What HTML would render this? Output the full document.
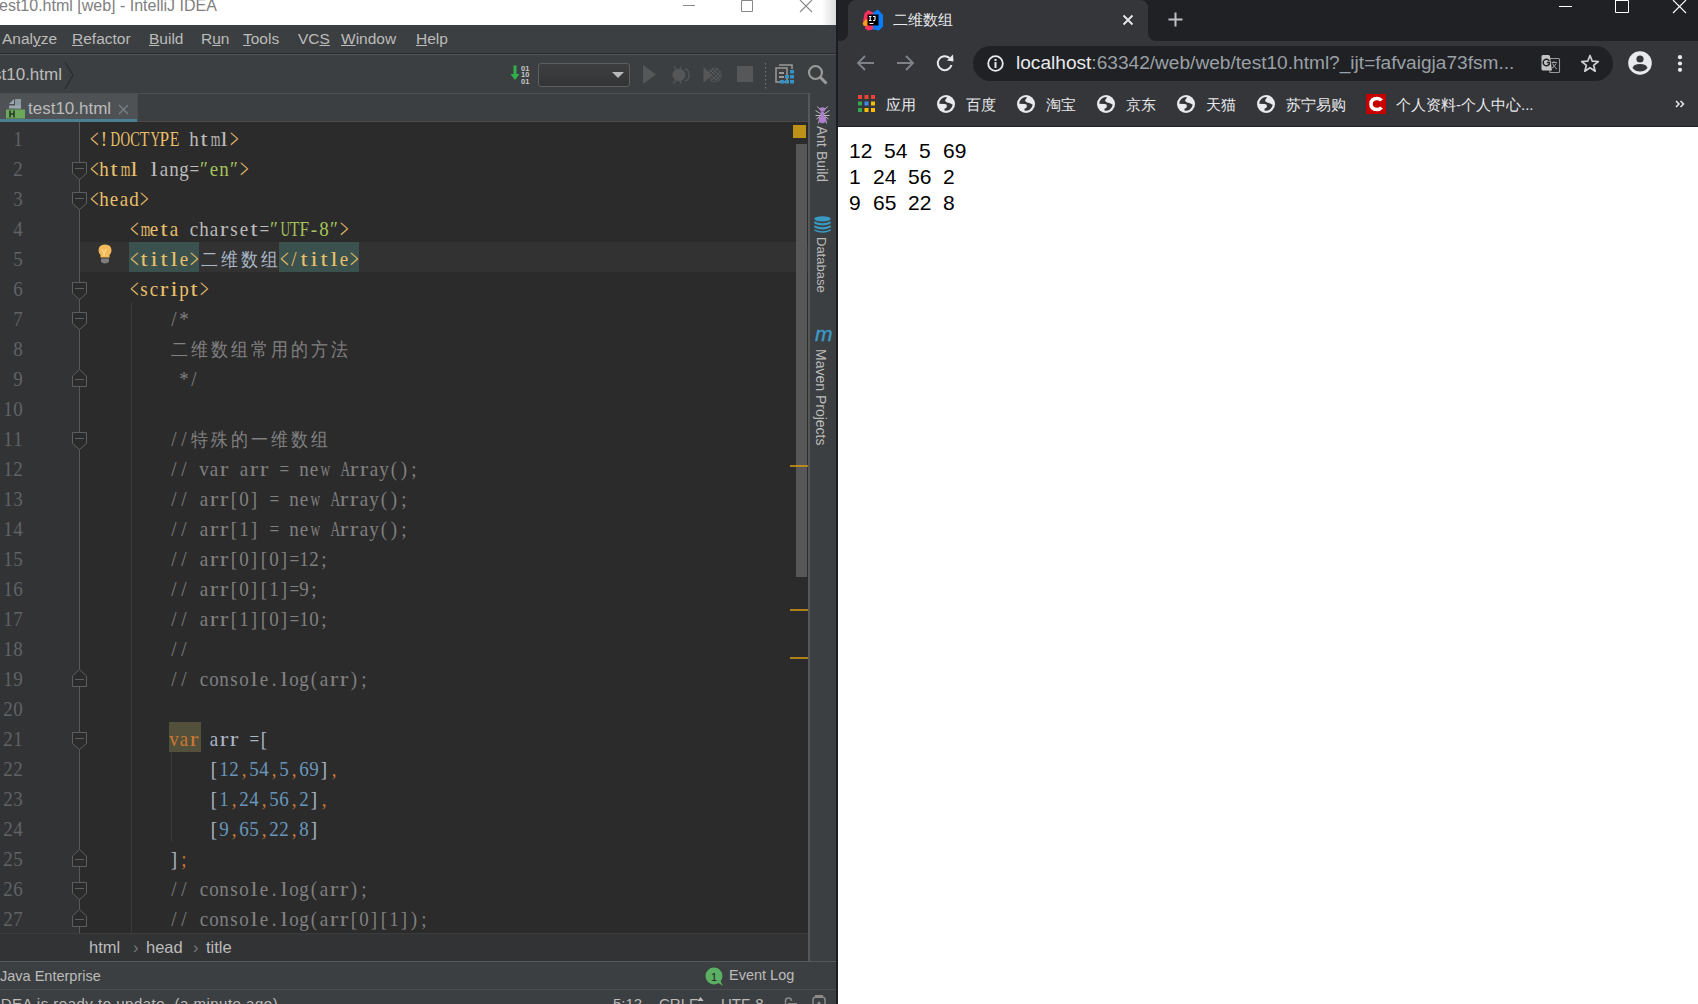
<!DOCTYPE html>
<html><head><meta charset="utf-8">
<style>
*{margin:0;padding:0;box-sizing:border-box}
html,body{width:1698px;height:1004px;overflow:hidden;background:#fff;font-family:"Liberation Sans",sans-serif}
.a{position:absolute}
svg{display:block}
#ide{left:0;top:0;width:837px;height:1004px;background:#3c3f41;overflow:hidden}
#title{left:0;top:0;width:837px;height:25px;background:#fff;overflow:hidden}
#title .t{left:-1px;top:-3px;font-size:16px;color:#808080;white-space:nowrap}
#menu{left:0;top:25px;width:837px;height:28px;background:#3c3f41}
#menu span{position:absolute;top:5px;font-size:15.5px;color:#bbbbbb;white-space:nowrap}
#menu u{text-decoration:underline;text-underline-offset:1px;text-decoration-thickness:1px}
#nav{left:0;top:53px;width:837px;height:40px;background:#3c3f41;border-top:1px solid #292929;box-shadow:inset 0 1px 0 #555}
#tabs{left:0;top:93px;width:809px;height:29px;background:#3c3f41;border-top:1px solid #4f4f4f;border-bottom:1px solid #4b4b4b}
#editor{left:0;top:122px;width:808px;height:811px;background:#2b2b2b;overflow:hidden}
#gutter{left:0;top:0;width:80px;height:811px;background:#313335;border-right:1px solid #555759}
#curline{left:80px;top:120px;width:729px;height:30px;background:#323232}
.ln{position:absolute;left:3px;width:20px;text-align:right;transform:scaleY(1.12);transform-origin:0 21.4px;font-family:"Liberation Serif",serif;font-size:19px;color:#606366;line-height:30px;height:30px;white-space:nowrap}
.cl{position:absolute;left:89px;transform:scaleY(1.12);transform-origin:0 21.4px;font-family:"Liberation Serif",serif;font-size:19px;color:#a9b7c6;line-height:30px;height:30px;white-space:nowrap}
.cl i,.ln i{display:inline-block;width:10px;text-align:center;font-style:normal}
.cl b{display:inline-block;height:1px}
.tg{color:#e8bf6a}.at{color:#bababa}.av{color:#a5c25c}.cm{color:#808080}.kw{color:#cc7832}.nu{color:#6897bb}.nt{color:#a9b7c6}
.tgh{color:#e8bf6a}
.kwh{color:#cc7832}
.cj{display:inline-block;width:20px;text-align:center;overflow:visible;font-size:17px}
#crumb{left:0;top:933px;width:809px;height:28px;background:#313335;border-top:1px solid #3a3c3e}
#crumb span{position:absolute;top:4px;font-size:16.5px;color:#bbbbbb;white-space:nowrap}
#rstrip{left:808px;top:93px;width:29px;height:868px;background:#3c3f41;border-left:2px solid #555759}
.vt{position:absolute;white-space:nowrap;font-size:14px;color:#bbbbbb;transform-origin:0 0;transform:rotate(90deg)}
#status1{left:0;top:961px;width:837px;height:29px;background:#3c3f41;border-top:1px solid #555759}
#status2{left:0;top:989px;width:837px;height:15px;background:#3c3f41;border-top:1px solid #4b4d4f;overflow:hidden}
#chrome{left:837px;top:0;width:861px;height:1004px;background:#fff}
#tabstrip{left:0;top:0;width:861px;height:41px;background:#202124}
#tab{left:11px;top:0;width:300px;height:41px;background:#35363a;border-radius:0 0 0 0}
#toolbar{left:0;top:41px;width:861px;height:44px;background:#35363a}
#omni{left:136px;top:5px;width:640px;height:35px;background:#202124;border-radius:18px}
#bm{left:0;top:85px;width:861px;height:42px;background:#35363a;border-bottom:1px solid #202124}
#page{left:1px;top:127px;width:860px;height:877px;background:#fff}
.pt{position:absolute;font-size:21px;color:#000;white-space:pre;font-family:"Liberation Sans",sans-serif}
.cjt{white-space:nowrap;font-size:15px;color:#e8eaed;line-height:16px}
.cjt .c{display:inline-block;width:15px;height:16px;overflow:hidden;vertical-align:top}
.cjt .lt{display:inline-block;vertical-align:top}
#tab{border-radius:8px 8px 0 0}
</style></head><body>
<div id="ide" class="a">
  <div id="title" class="a"><div class="t a">est10.html [web] - IntelliJ IDEA</div><div class="a" style="left:822px;top:0;width:15px;height:25px;background:linear-gradient(90deg,#fff,#ddd 90%,#222 94%)"></div>
    <svg class="a" style="left:680px;top:0" width="140" height="25" viewBox="0 0 140 25">
      <path d="M3 5.5H15" stroke="#888" stroke-width="1"/>
      <path d="M61.5 0.5V11.5H72.5V0.5Z" fill="none" stroke="#888" stroke-width="1"/>
      <path d="M120 0L132 12M132 0L120 12" stroke="#888" stroke-width="1.1"/>
    </svg>
  </div>
  <div id="menu" class="a">
    <span style="left:2px">Anal<u>y</u>ze</span>
    <span style="left:72px"><u>R</u>efactor</span>
    <span style="left:149px"><u>B</u>uild</span>
    <span style="left:201px">R<u>u</u>n</span>
    <span style="left:243px"><u>T</u>ools</span>
    <span style="left:298px">VC<u>S</u></span>
    <span style="left:341px"><u>W</u>indow</span>
    <span style="left:416px"><u>H</u>elp</span>
  </div>
  <div id="nav" class="a">
    <div class="a" style="left:-7px;top:11px;font-size:17px;color:#bbbbbb;white-space:nowrap">st10.html</div>
    <svg class="a" style="left:64px;top:8px" width="12" height="28" viewBox="0 0 12 28"><path d="M1 0L9 13L1 27" fill="none" stroke="#2b2b2b" stroke-width="1.2"/></svg>
    <!-- toolbar icons -->
    <svg class="a" style="left:510px;top:10px" width="22" height="22" viewBox="0 0 22 22">
      <path d="M3.5 1.5H6.5V10H9.5L5 16L0.5 10H3.5Z" fill="#2fb04a"/>
      <text x="11" y="7" font-family="Liberation Sans" font-weight="bold" font-size="7.5" fill="#c8c8c8">01</text>
      <text x="11" y="13" font-family="Liberation Sans" font-weight="bold" font-size="7.5" fill="#c8c8c8">10</text>
      <text x="11" y="19.5" font-family="Liberation Sans" font-weight="bold" font-size="7.5" fill="#c8c8c8">01</text>
    </svg>
    <div class="a" style="left:538px;top:9px;width:92px;height:24px;border:1px solid #5e6060;border-radius:3px;background:linear-gradient(#3c3e40,#323436)"></div>
    <svg class="a" style="left:611px;top:17px" width="14" height="8" viewBox="0 0 14 8"><path d="M1 1H13L7 7Z" fill="#b9b9b9"/></svg>
    <svg class="a" style="left:643px;top:11px" width="14" height="19" viewBox="0 0 14 19"><path d="M0 0L13 9.5L0 19Z" fill="#555758"/></svg>
    <svg class="a" style="left:671px;top:11px" width="20" height="20" viewBox="0 0 20 20">
      <ellipse cx="8" cy="10" rx="6.5" ry="6.2" fill="#545658"/>
      <path d="M3 1.5L5.5 4.5M10 1.5L9 4.5M2 18.5L5 15.5M10 18.5L9 15.5" stroke="#545658" stroke-width="1.3"/>
      <path d="M14 4Q18 4.5 18 10Q18 15.5 14 16" fill="none" stroke="#545658" stroke-width="1.3"/>
      <path d="M12.5 5.5Q15.5 7 15.5 10Q15.5 13 12.5 14.5" fill="none" stroke="#3c3f41" stroke-width="1"/>
    </svg>
    <svg class="a" style="left:703px;top:11px" width="20" height="20" viewBox="0 0 20 20">
      <defs><clipPath id="cc"><circle cx="11.5" cy="10" r="7.5"/></clipPath></defs>
      <path d="M0.5 2L9 10L0.5 18Z" fill="#545658"/>
      <g clip-path="url(#cc)" stroke="#545658" stroke-width="1.2">
        <path d="M0 6L14 20M0 2L18 20M3 1L20 18M7 1L20 14M11 1L20 10M0 14L14 0M0 18L18 0M3 21L20 4M7 21L20 8M11 21L20 12"/>
      </g>
    </svg>
    <div class="a" style="left:737px;top:12px;width:16px;height:16px;background:#555758"></div>
    <svg class="a" style="left:764px;top:9px" width="3" height="26" viewBox="0 0 3 26"><path d="M1.5 0V26" stroke="#6b6d6f" stroke-width="1.2" stroke-dasharray="1.5 2.5"/></svg>
    <svg class="a" style="left:775px;top:10px" width="21" height="21" viewBox="0 0 21 21">
      <path d="M4 1H17V5" fill="none" stroke="#9a9a9a" stroke-width="1.5"/>
      <rect x="1" y="4" width="11" height="14" fill="#3c3f41" stroke="#9a9a9a" stroke-width="1.5"/>
      <rect x="4" y="8" width="5" height="2" fill="#9a9a9a"/><rect x="4" y="12" width="5" height="2" fill="#9a9a9a"/>
      <rect x="15" y="6" width="4" height="3.5" fill="#3592c4"/><rect x="10" y="11" width="4" height="3.5" fill="#3592c4"/><rect x="15" y="11" width="4" height="3.5" fill="#3592c4"/>
      <rect x="5" y="16" width="4" height="3.5" fill="#3592c4"/><rect x="10" y="16" width="4" height="3.5" fill="#3592c4"/><rect x="15" y="16" width="4" height="3.5" fill="#3592c4"/>
    </svg>
    <svg class="a" style="left:807px;top:10px" width="22" height="22" viewBox="0 0 22 22">
      <circle cx="8.5" cy="8.5" r="6.5" fill="none" stroke="#9a9a9a" stroke-width="2.2"/>
      <path d="M13 13L19.5 19.5" stroke="#9a9a9a" stroke-width="3"/>
    </svg>
  </div>
  <div id="tabs" class="a">
    <div class="a" style="left:0;top:0;width:137px;height:28px;background:#4e5254;border-bottom:3px solid #4b7f92;box-shadow:1px 0 0 #4b4b4b"></div>
    <svg class="a" style="left:5px;top:5px" width="22" height="20" viewBox="0 0 22 20">
      <path d="M4 5L9 0V5Z" fill="#9aa7b0"/>
      <rect x="10" y="0" width="6" height="9.5" fill="#8e9aa2"/>
      <rect x="4" y="6.5" width="12" height="3" fill="#9aa7b0"/>
      <rect x="1" y="10.5" width="19" height="9" fill="#6aa85a"/>
      <path d="M5 11.5V18.5M9 11.5V18.5M5 15H9" stroke="#2a3a28" stroke-width="1.6"/>
    </svg>
    <div class="a" style="left:28px;top:5px;font-size:17px;color:#bbbbbb;white-space:nowrap">test10.html</div>
    <svg class="a" style="left:118px;top:10px" width="11" height="11" viewBox="0 0 11 11"><path d="M1 1L10 10M10 1L1 10" stroke="#7b8084" stroke-width="1.2"/></svg>
  </div>
  <div id="editor" class="a">
    <div id="gutter" class="a"></div>
    <div id="curline" class="a"></div>
    <svg class="a" style="left:79px;top:0" width="2" height="811"><path d="M0.5 0V811" stroke="#555759"/></svg>
    <!-- indent guides -->
    <div class="a" style="left:131px;top:180px;width:1px;height:631px;background:#393939"></div>
    <div class="a" style="left:171px;top:630px;width:1px;height:90px;background:#393939"></div>
    <div class="a" style="left:129px;top:120px;width:70px;height:30px;background:#3b514d"></div>
    <div class="a" style="left:279px;top:120px;width:80px;height:30px;background:#3b514d"></div>
    <div class="a" style="left:169px;top:600px;width:32px;height:30px;background:#52503a"></div>
    <svg class="a" style="left:71px;top:40px" width="17" height="19" viewBox="0 0 17 19"><path d="M1.5 0.5H15.5V11.5L8.5 17.5L1.5 11.5Z" fill="#2b2b2b" stroke="#5c5f61"/><path d="M4 6.5H13" stroke="#5c5f61"/></svg>
<svg class="a" style="left:71px;top:70px" width="17" height="19" viewBox="0 0 17 19"><path d="M1.5 0.5H15.5V11.5L8.5 17.5L1.5 11.5Z" fill="#2b2b2b" stroke="#5c5f61"/><path d="M4 6.5H13" stroke="#5c5f61"/></svg>
<svg class="a" style="left:71px;top:160px" width="17" height="19" viewBox="0 0 17 19"><path d="M1.5 0.5H15.5V11.5L8.5 17.5L1.5 11.5Z" fill="#2b2b2b" stroke="#5c5f61"/><path d="M4 6.5H13" stroke="#5c5f61"/></svg>
<svg class="a" style="left:71px;top:190px" width="17" height="19" viewBox="0 0 17 19"><path d="M1.5 0.5H15.5V11.5L8.5 17.5L1.5 11.5Z" fill="#2b2b2b" stroke="#5c5f61"/><path d="M4 6.5H13" stroke="#5c5f61"/></svg>
<svg class="a" style="left:71px;top:310px" width="17" height="19" viewBox="0 0 17 19"><path d="M1.5 0.5H15.5V11.5L8.5 17.5L1.5 11.5Z" fill="#2b2b2b" stroke="#5c5f61"/><path d="M4 6.5H13" stroke="#5c5f61"/></svg>
<svg class="a" style="left:71px;top:610px" width="17" height="19" viewBox="0 0 17 19"><path d="M1.5 0.5H15.5V11.5L8.5 17.5L1.5 11.5Z" fill="#2b2b2b" stroke="#5c5f61"/><path d="M4 6.5H13" stroke="#5c5f61"/></svg>
<svg class="a" style="left:71px;top:760px" width="17" height="19" viewBox="0 0 17 19"><path d="M1.5 0.5H15.5V11.5L8.5 17.5L1.5 11.5Z" fill="#2b2b2b" stroke="#5c5f61"/><path d="M4 6.5H13" stroke="#5c5f61"/></svg>
<svg class="a" style="left:71px;top:247px" width="17" height="19" viewBox="0 0 17 19"><path d="M1.5 17.5H15.5V7L8.5 0.5L1.5 7Z" fill="#2b2b2b" stroke="#5c5f61"/><path d="M4 10.5H13" stroke="#5c5f61"/></svg>
<svg class="a" style="left:71px;top:547px" width="17" height="19" viewBox="0 0 17 19"><path d="M1.5 17.5H15.5V7L8.5 0.5L1.5 7Z" fill="#2b2b2b" stroke="#5c5f61"/><path d="M4 10.5H13" stroke="#5c5f61"/></svg>
<svg class="a" style="left:71px;top:727px" width="17" height="19" viewBox="0 0 17 19"><path d="M1.5 17.5H15.5V7L8.5 0.5L1.5 7Z" fill="#2b2b2b" stroke="#5c5f61"/><path d="M4 10.5H13" stroke="#5c5f61"/></svg>
<svg class="a" style="left:71px;top:787px" width="17" height="19" viewBox="0 0 17 19"><path d="M1.5 17.5H15.5V7L8.5 0.5L1.5 7Z" fill="#2b2b2b" stroke="#5c5f61"/><path d="M4 10.5H13" stroke="#5c5f61"/></svg>
    <svg class="a" style="left:98px;top:122px" width="16" height="21" viewBox="0 0 16 21">
      <path d="M2.5 11Q0.5 9 0.5 6.5Q0.5 0.5 7 0.5Q13.5 0.5 13.5 6.5Q13.5 9 11.5 11V13.5H2.5Z" fill="#f6b957"/>
      <path d="M3.5 5L6 8.5L8.5 5M6 8.5V12" stroke="#fde7a8" stroke-width="1" fill="none"/>
      <path d="M3 14.5H11V17.5Q10 19.5 7 19.5Q4 19.5 3 17.5Z" fill="#7d7d7d"/>
    </svg>
    <div class="ln" style="top:3px"><i>1</i></div>
<div class="cl" style="top:3px"><span class="tg"><i style="transform:scale(0.8,1.3)">&lt;</i><i>!</i><i style="transform:scaleX(0.70)">D</i><i style="transform:scaleX(0.70)">O</i><i style="transform:scaleX(0.76)">C</i><i style="transform:scaleX(0.83)">T</i><i style="transform:scaleX(0.70)">Y</i><i style="transform:scaleX(0.91)">P</i><i style="transform:scaleX(0.83)">E</i></span><span class="at"><b style="width:10px"></b><i>h</i><i style="transform:scaleX(1.35)">t</i><i style="transform:scaleX(0.65)">m</i><i style="transform:scaleX(1.35)">l</i></span><span class="tg"><i style="transform:scale(0.8,1.3)">&gt;</i></span></div>
<div class="ln" style="top:33px"><i>2</i></div>
<div class="cl" style="top:33px"><span class="tg"><i style="transform:scale(0.8,1.3)">&lt;</i><i>h</i><i style="transform:scaleX(1.35)">t</i><i style="transform:scaleX(0.65)">m</i><i style="transform:scaleX(1.35)">l</i></span><span class="at"><b style="width:10px"></b><i style="transform:scaleX(1.35)">l</i><i>a</i><i>n</i><i>g</i><i style="transform:scaleX(0.90)">=</i></span><span class="av"><i>″</i><i>e</i><i>n</i><i>″</i></span><span class="tg"><i style="transform:scale(0.8,1.3)">&gt;</i></span></div>
<div class="ln" style="top:63px"><i>3</i></div>
<div class="cl" style="top:63px"><span class="tg"><i style="transform:scale(0.8,1.3)">&lt;</i><i>h</i><i>e</i><i>a</i><i>d</i><i style="transform:scale(0.8,1.3)">&gt;</i></span></div>
<div class="ln" style="top:93px"><i>4</i></div>
<div class="cl" style="top:93px"><b style="width:40px"></b><span class="tg"><i style="transform:scale(0.8,1.3)">&lt;</i><i style="transform:scaleX(0.65)">m</i><i>e</i><i style="transform:scaleX(1.35)">t</i><i>a</i></span><span class="at"><b style="width:10px"></b><i>c</i><i>h</i><i>a</i><i style="transform:scaleX(1.35)">r</i><i>s</i><i>e</i><i style="transform:scaleX(1.35)">t</i><i style="transform:scaleX(0.90)">=</i></span><span class="av"><i>″</i><i style="transform:scaleX(0.70)">U</i><i style="transform:scaleX(0.83)">T</i><i style="transform:scaleX(0.91)">F</i><i>-</i><i>8</i><i>″</i></span><span class="tg"><i style="transform:scale(0.8,1.3)">&gt;</i></span></div>
<div class="ln" style="top:123px"><i>5</i></div>
<div class="cl" style="top:123px"><b style="width:40px"></b><span class="tgh"><i style="transform:scale(0.8,1.3)">&lt;</i><i style="transform:scaleX(1.35)">t</i><i style="transform:scaleX(1.35)">i</i><i style="transform:scaleX(1.35)">t</i><i style="transform:scaleX(1.35)">l</i><i>e</i><i style="transform:scale(0.8,1.3)">&gt;</i></span><span class="cj">二</span><span class="cj">维</span><span class="cj">数</span><span class="cj">组</span><span class="tgh"><i style="transform:scale(0.8,1.3)">&lt;</i><i>/</i><i style="transform:scaleX(1.35)">t</i><i style="transform:scaleX(1.35)">i</i><i style="transform:scaleX(1.35)">t</i><i style="transform:scaleX(1.35)">l</i><i>e</i><i style="transform:scale(0.8,1.3)">&gt;</i></span></div>
<div class="ln" style="top:153px"><i>6</i></div>
<div class="cl" style="top:153px"><b style="width:40px"></b><span class="tg"><i style="transform:scale(0.8,1.3)">&lt;</i><i>s</i><i>c</i><i style="transform:scaleX(1.35)">r</i><i style="transform:scaleX(1.35)">i</i><i>p</i><i style="transform:scaleX(1.35)">t</i><i style="transform:scale(0.8,1.3)">&gt;</i></span></div>
<div class="ln" style="top:183px"><i>7</i></div>
<div class="cl" style="top:183px"><span class="cm"><b style="width:80px"></b><i>/</i><i>*</i></span></div>
<div class="ln" style="top:213px"><i>8</i></div>
<div class="cl" style="top:213px"><span class="cm"><b style="width:80px"></b></span><span class="cm"><span class="cj">二</span><span class="cj">维</span><span class="cj">数</span><span class="cj">组</span><span class="cj">常</span><span class="cj">用</span><span class="cj">的</span><span class="cj">方</span><span class="cj">法</span></span></div>
<div class="ln" style="top:243px"><i>9</i></div>
<div class="cl" style="top:243px"><span class="cm"><b style="width:90px"></b><i>*</i><i>/</i></span></div>
<div class="ln" style="top:273px"><i>1</i><i>0</i></div>
<div class="ln" style="top:303px"><i>1</i><i>1</i></div>
<div class="cl" style="top:303px"><span class="cm"><b style="width:80px"></b><i>/</i><i>/</i></span><span class="cm"><span class="cj">特</span><span class="cj">殊</span><span class="cj">的</span><span class="cj">一</span><span class="cj">维</span><span class="cj">数</span><span class="cj">组</span></span></div>
<div class="ln" style="top:333px"><i>1</i><i>2</i></div>
<div class="cl" style="top:333px"><span class="cm"><b style="width:80px"></b><i>/</i><i>/</i><b style="width:10px"></b><i>v</i><i>a</i><i style="transform:scaleX(1.35)">r</i><b style="width:10px"></b><i>a</i><i style="transform:scaleX(1.35)">r</i><i style="transform:scaleX(1.35)">r</i><b style="width:10px"></b><i style="transform:scaleX(0.90)">=</i><b style="width:10px"></b><i>n</i><i>e</i><i style="transform:scaleX(0.70)">w</i><b style="width:10px"></b><i style="transform:scaleX(0.70)">A</i><i style="transform:scaleX(1.35)">r</i><i style="transform:scaleX(1.35)">r</i><i>a</i><i>y</i><i>(</i><i>)</i><i>;</i></span></div>
<div class="ln" style="top:363px"><i>1</i><i>3</i></div>
<div class="cl" style="top:363px"><span class="cm"><b style="width:80px"></b><i>/</i><i>/</i><b style="width:10px"></b><i>a</i><i style="transform:scaleX(1.35)">r</i><i style="transform:scaleX(1.35)">r</i><i>[</i><i>0</i><i>]</i><b style="width:10px"></b><i style="transform:scaleX(0.90)">=</i><b style="width:10px"></b><i>n</i><i>e</i><i style="transform:scaleX(0.70)">w</i><b style="width:10px"></b><i style="transform:scaleX(0.70)">A</i><i style="transform:scaleX(1.35)">r</i><i style="transform:scaleX(1.35)">r</i><i>a</i><i>y</i><i>(</i><i>)</i><i>;</i></span></div>
<div class="ln" style="top:393px"><i>1</i><i>4</i></div>
<div class="cl" style="top:393px"><span class="cm"><b style="width:80px"></b><i>/</i><i>/</i><b style="width:10px"></b><i>a</i><i style="transform:scaleX(1.35)">r</i><i style="transform:scaleX(1.35)">r</i><i>[</i><i>1</i><i>]</i><b style="width:10px"></b><i style="transform:scaleX(0.90)">=</i><b style="width:10px"></b><i>n</i><i>e</i><i style="transform:scaleX(0.70)">w</i><b style="width:10px"></b><i style="transform:scaleX(0.70)">A</i><i style="transform:scaleX(1.35)">r</i><i style="transform:scaleX(1.35)">r</i><i>a</i><i>y</i><i>(</i><i>)</i><i>;</i></span></div>
<div class="ln" style="top:423px"><i>1</i><i>5</i></div>
<div class="cl" style="top:423px"><span class="cm"><b style="width:80px"></b><i>/</i><i>/</i><b style="width:10px"></b><i>a</i><i style="transform:scaleX(1.35)">r</i><i style="transform:scaleX(1.35)">r</i><i>[</i><i>0</i><i>]</i><i>[</i><i>0</i><i>]</i><i style="transform:scaleX(0.90)">=</i><i>1</i><i>2</i><i>;</i></span></div>
<div class="ln" style="top:453px"><i>1</i><i>6</i></div>
<div class="cl" style="top:453px"><span class="cm"><b style="width:80px"></b><i>/</i><i>/</i><b style="width:10px"></b><i>a</i><i style="transform:scaleX(1.35)">r</i><i style="transform:scaleX(1.35)">r</i><i>[</i><i>0</i><i>]</i><i>[</i><i>1</i><i>]</i><i style="transform:scaleX(0.90)">=</i><i>9</i><i>;</i></span></div>
<div class="ln" style="top:483px"><i>1</i><i>7</i></div>
<div class="cl" style="top:483px"><span class="cm"><b style="width:80px"></b><i>/</i><i>/</i><b style="width:10px"></b><i>a</i><i style="transform:scaleX(1.35)">r</i><i style="transform:scaleX(1.35)">r</i><i>[</i><i>1</i><i>]</i><i>[</i><i>0</i><i>]</i><i style="transform:scaleX(0.90)">=</i><i>1</i><i>0</i><i>;</i></span></div>
<div class="ln" style="top:513px"><i>1</i><i>8</i></div>
<div class="cl" style="top:513px"><span class="cm"><b style="width:80px"></b><i>/</i><i>/</i></span></div>
<div class="ln" style="top:543px"><i>1</i><i>9</i></div>
<div class="cl" style="top:543px"><span class="cm"><b style="width:80px"></b><i>/</i><i>/</i><b style="width:10px"></b><i>c</i><i>o</i><i>n</i><i>s</i><i>o</i><i style="transform:scaleX(1.35)">l</i><i>e</i><i>.</i><i style="transform:scaleX(1.35)">l</i><i>o</i><i>g</i><i>(</i><i>a</i><i style="transform:scaleX(1.35)">r</i><i style="transform:scaleX(1.35)">r</i><i>)</i><i>;</i></span></div>
<div class="ln" style="top:573px"><i>2</i><i>0</i></div>
<div class="ln" style="top:603px"><i>2</i><i>1</i></div>
<div class="cl" style="top:603px"><b style="width:80px"></b><span class="kwh"><i>v</i><i>a</i><i style="transform:scaleX(1.35)">r</i></span><b style="width:10px"></b><i>a</i><i style="transform:scaleX(1.35)">r</i><i style="transform:scaleX(1.35)">r</i><b style="width:10px"></b><i style="transform:scaleX(0.90)">=</i><i>[</i></div>
<div class="ln" style="top:633px"><i>2</i><i>2</i></div>
<div class="cl" style="top:633px"><b style="width:120px"></b><i>[</i><span class="nu"><i>1</i><i>2</i></span><span class="kw"><i>,</i></span><span class="nu"><i>5</i><i>4</i></span><span class="kw"><i>,</i></span><span class="nu"><i>5</i></span><span class="kw"><i>,</i></span><span class="nu"><i>6</i><i>9</i></span><i>]</i><span class="kw"><i>,</i></span></div>
<div class="ln" style="top:663px"><i>2</i><i>3</i></div>
<div class="cl" style="top:663px"><b style="width:120px"></b><i>[</i><span class="nu"><i>1</i></span><span class="kw"><i>,</i></span><span class="nu"><i>2</i><i>4</i></span><span class="kw"><i>,</i></span><span class="nu"><i>5</i><i>6</i></span><span class="kw"><i>,</i></span><span class="nu"><i>2</i></span><i>]</i><span class="kw"><i>,</i></span></div>
<div class="ln" style="top:693px"><i>2</i><i>4</i></div>
<div class="cl" style="top:693px"><b style="width:120px"></b><i>[</i><span class="nu"><i>9</i></span><span class="kw"><i>,</i></span><span class="nu"><i>6</i><i>5</i></span><span class="kw"><i>,</i></span><span class="nu"><i>2</i><i>2</i></span><span class="kw"><i>,</i></span><span class="nu"><i>8</i></span><i>]</i></div>
<div class="ln" style="top:723px"><i>2</i><i>5</i></div>
<div class="cl" style="top:723px"><b style="width:80px"></b><i>]</i><span class="kw"><i>;</i></span></div>
<div class="ln" style="top:753px"><i>2</i><i>6</i></div>
<div class="cl" style="top:753px"><span class="cm"><b style="width:80px"></b><i>/</i><i>/</i><b style="width:10px"></b><i>c</i><i>o</i><i>n</i><i>s</i><i>o</i><i style="transform:scaleX(1.35)">l</i><i>e</i><i>.</i><i style="transform:scaleX(1.35)">l</i><i>o</i><i>g</i><i>(</i><i>a</i><i style="transform:scaleX(1.35)">r</i><i style="transform:scaleX(1.35)">r</i><i>)</i><i>;</i></span></div>
<div class="ln" style="top:783px"><i>2</i><i>7</i></div>
<div class="cl" style="top:783px"><span class="cm"><b style="width:80px"></b><i>/</i><i>/</i><b style="width:10px"></b><i>c</i><i>o</i><i>n</i><i>s</i><i>o</i><i style="transform:scaleX(1.35)">l</i><i>e</i><i>.</i><i style="transform:scaleX(1.35)">l</i><i>o</i><i>g</i><i>(</i><i>a</i><i style="transform:scaleX(1.35)">r</i><i style="transform:scaleX(1.35)">r</i><i>[</i><i>0</i><i>]</i><i>[</i><i>1</i><i>]</i><i>)</i><i>;</i></span></div>
    <!-- scrollbar / markers -->
    <div class="a" style="left:793px;top:3px;width:13px;height:13px;background:#be9117"></div>
    <div class="a" style="left:796px;top:22px;width:11px;height:433px;background:#575757"></div>
    <div class="a" style="left:790px;top:343px;width:18px;height:2px;background:rgba(205,150,15,0.8)"></div>
    <div class="a" style="left:790px;top:487px;width:18px;height:2px;background:rgba(205,150,15,0.8)"></div>
    <div class="a" style="left:790px;top:535px;width:18px;height:2px;background:rgba(205,150,15,0.8)"></div>
  </div>
  <div id="crumb" class="a">
    <span style="left:89px">html</span>
    <span style="left:133px;color:#777">&#8250;</span>
    <span style="left:146px">head</span>
    <span style="left:193px;color:#777">&#8250;</span>
    <span style="left:206px">title</span>
  </div>
  <div id="rstrip" class="a">
    <svg class="a" style="left:5px;top:13px" width="15" height="18" viewBox="0 0 15 18">
      <path d="M2.5 0.5L4 2.5L5.5 3M12.5 0.5L11 2.5L9.5 3M0.5 4.5L6 8M14.5 4.5L9 8M0.5 9.5L6 9.5M14.5 9.5L9 9.5M1.5 13L5 10.5L3.5 17.5M13.5 13L10 10.5L11.5 17.5" stroke="#c8c8c8" stroke-width="0.9" fill="none"/>
      <ellipse cx="7.5" cy="3.5" rx="2.7" ry="2.2" fill="#b07fd1"/>
      <ellipse cx="7.5" cy="8.2" rx="2" ry="2.6" fill="#b07fd1"/>
      <ellipse cx="7.5" cy="13.6" rx="3.6" ry="3.6" fill="#b07fd1"/>
    </svg>
    <div class="vt" style="left:19.5px;top:33px">Ant Build</div>
    <svg class="a" style="left:4px;top:123px" width="18" height="18" viewBox="0 0 18 18">
      <ellipse cx="8.5" cy="2.8" rx="8.3" ry="2.6" fill="#3a9ac6"/>
      <path d="M0.3 5.3Q8.5 9.3 16.7 5.3V7.6Q8.5 11.6 0.3 7.6Z" fill="#3a9ac6"/>
      <path d="M0.3 9.3Q8.5 13.3 16.7 9.3V11.6Q8.5 15.6 0.3 11.6Z" fill="#3a9ac6"/>
      <path d="M0.3 13.3Q8.5 17.3 16.7 13.3V14.8Q8.5 18.8 0.3 14.8Z" fill="#3a9ac6"/>
    </svg>
    <div class="vt" style="left:19px;top:144px;font-size:13px">Database</div>
    <div class="a" style="left:5px;top:231px;font-size:21px;font-style:italic;color:#3a9ac6;line-height:19px;-webkit-text-stroke:0.4px #3a9ac6">m</div>
    <div class="vt" style="left:19px;top:256px">Maven Projects</div>
  </div>
  <div id="status1" class="a">
    <div class="a" style="left:0;top:6px;font-size:14.5px;color:#bbbbbb;white-space:nowrap">Java Enterprise</div>
    <svg class="a" style="left:705px;top:5px" width="20" height="19" viewBox="0 0 20 19"><circle cx="9" cy="9" r="8.5" fill="#5aaf62"/><path d="M12 15L18 19L15 13Z" fill="#5aaf62"/><text x="6" y="13.5" font-family="Liberation Sans" font-size="11" fill="#222">1</text></svg>
    <div class="a" style="left:729px;top:5px;font-size:14.5px;color:#bbbbbb;white-space:nowrap">Event Log</div>
  </div>
  <div id="status2" class="a">
    <div class="a" style="left:-4px;top:5px;font-size:15px;letter-spacing:0.5px;color:#bbbbbb;white-space:nowrap">IDEA is ready to update. (a minute ago)</div>
    <div class="a" style="left:613px;top:5px;font-size:15px;color:#bbbbbb;white-space:nowrap">5:12</div>
    <div class="a" style="left:659px;top:5px;font-size:15px;color:#bbbbbb;white-space:nowrap">CRLF</div>
    <svg class="a" style="left:697px;top:7px" width="7" height="4" viewBox="0 0 8 5"><path d="M0 5L4 0L8 5Z" fill="#bbb"/></svg>
    <svg class="a" style="left:783px;top:7px" width="14" height="11" viewBox="0 0 14 11"><path d="M2.5 7V4Q2.5 1 5.5 1Q8.5 1 8.5 4" fill="none" stroke="#8a8a8a" stroke-width="1.5"/><rect x="5" y="6" width="9" height="5" fill="#8a8a8a"/></svg>
    <svg class="a" style="left:811px;top:4px" width="16" height="15" viewBox="0 0 16 15"><rect x="2" y="3" width="12" height="12" rx="3" fill="none" stroke="#8a8a8a" stroke-width="1.5"/><rect x="4" y="1" width="8" height="3" fill="#8a8a8a"/><circle cx="8" cy="9" r="1.5" fill="#8a8a8a"/></svg>
    <div class="a" style="left:721px;top:5px;font-size:15px;color:#bbbbbb;white-space:nowrap">UTF-8</div>
  </div>
</div>
<div id="chrome" class="a">
  <div id="tabstrip" class="a">
    <div class="a" style="left:1px;top:0;width:10px;height:41px;background:#202124"></div>
    <div id="tab" class="a"></div>
    <div class="a" style="left:3px;top:33px;width:8px;height:8px;background:#35363a"></div>
    <div class="a" style="left:3px;top:25px;width:8px;height:16px;background:#202124;border-bottom-right-radius:8px"></div>
    <div class="a" style="left:311px;top:33px;width:8px;height:8px;background:#35363a"></div>
    <div class="a" style="left:311px;top:25px;width:8px;height:16px;background:#202124;border-bottom-left-radius:8px"></div>
    <svg class="a" style="left:25px;top:9px" width="22" height="22" viewBox="0 0 22 22">
      <path d="M1 12.5L2.5 4.5L6 1L11 3.5V20.5L6 21.5L3 19.5L3.5 16Z" fill="#fe315d"/>
      <path d="M11 3.5L16 0.5L21 6V17.5L17 21.5L11 20.5Z" fill="#087cfa"/>
      <path d="M0.5 14.5L3.5 10.5L6 11V16.5L2 17Z" fill="#fc9d1d"/>
      <rect x="5.5" y="5.5" width="11" height="11" fill="#000"/>
      <path d="M7 7.5H9.5M8.2 7.5V11.5M7 11.5H9.5M11 7.5H13V10.5Q13 11.8 11 11.8M7.5 14.5H11.5" stroke="#fff" stroke-width="1.1" fill="none"/>
    </svg>
    <div class="a cjt" style="left:56px;top:12px"><span class="c">二</span><span class="c">维</span><span class="c">数</span><span class="c">组</span></div>
    <svg class="a" style="left:285px;top:14px" width="12" height="12" viewBox="0 0 12 12"><path d="M1.5 1.5L10.5 10.5M10.5 1.5L1.5 10.5" stroke="#e8eaed" stroke-width="1.8"/></svg>
    <svg class="a" style="left:331px;top:12px" width="15" height="15" viewBox="0 0 15 15"><path d="M7.5 0.5V14.5M0.5 7.5H14.5" stroke="#bdc1c6" stroke-width="2"/></svg>
    <svg class="a" style="left:718px;top:0" width="143" height="16" viewBox="0 0 143 16">
      <path d="M4 6.5H17" stroke="#fff" stroke-width="1"/>
      <path d="M60.5 0V12.5H73.5V0.5H60.5" fill="none" stroke="#fff" stroke-width="1"/>
      <path d="M118 0L131 13M131 0L118 13" stroke="#fff" stroke-width="1.1"/>
    </svg>
  </div>
  <div id="toolbar" class="a">
    <svg class="a" style="left:19px;top:13px" width="19" height="18" viewBox="0 0 19 18"><path d="M18 9H2.5M9 2L2 9L9 16" fill="none" stroke="#7f8286" stroke-width="1.9"/></svg>
    <svg class="a" style="left:59px;top:13px" width="19" height="18" viewBox="0 0 19 18"><path d="M1 9H16.5M10 2L17 9L10 16" fill="none" stroke="#7f8286" stroke-width="1.9"/></svg>
    <svg class="a" style="left:99px;top:13px" width="19" height="18" viewBox="0 0 19 18"><path d="M15.5 11A7 7 0 1 1 13.5 4" fill="none" stroke="#e8eaed" stroke-width="2"/><path d="M11 6.5L17.5 7.5L17 0.5Z" fill="#e8eaed"/></svg>
    <div id="omni" class="a">
      <svg class="a" style="left:14px;top:9px" width="17" height="17" viewBox="0 0 17 17"><circle cx="8.5" cy="8.5" r="7.3" fill="none" stroke="#e8eaed" stroke-width="1.8"/><rect x="7.5" y="7" width="2" height="6" fill="#e8eaed"/><rect x="7.5" y="4" width="2" height="2" fill="#e8eaed"/></svg>
      <div class="a" style="left:43px;top:6px;font-size:19.1px;color:#e8eaed;white-space:nowrap">localhost<span style="color:#9aa0a6">:63342/web/web/test10.html?_ijt=fafvaigja73fsm...</span></div>
      <svg class="a" style="left:567px;top:8px" width="21" height="20" viewBox="0 0 21 20">
        <path d="M9 4.5H18.5Q19.5 4.5 19.5 5.5V17.5Q19.5 18.5 18.5 18.5H10Z" fill="none" stroke="#9a9a9a" stroke-width="1.1"/>
        <path d="M1.5 2.5Q1.5 1 3 1H8.5Q10 1 10 2.5L12 16.5H3Q1.5 16.5 1.5 15Z" fill="#c4c4c4"/>
        <path d="M9.3 6.8A3.3 3.3 0 1 0 9.3 10.2L9.3 8.6H6.8" fill="none" stroke="#222" stroke-width="1.5"/>
        <path d="M11.5 8.5H17M14 7V8.5M12.5 9.5Q14.5 14 17 15M16 9.5Q14.5 13 12 14" stroke="#b0b0b0" stroke-width="0.9" fill="none"/>
      </svg>
      <svg class="a" style="left:607px;top:8px" width="20" height="19" viewBox="0 0 20 19"><path d="M10 1.5L12.3 7.2L18.3 7.5L13.6 11.3L15.2 17.2L10 13.8L4.8 17.2L6.4 11.3L1.7 7.5L7.7 7.2Z" fill="none" stroke="#cfd1d4" stroke-width="1.7" stroke-linejoin="round"/></svg>
    </div>
    <svg class="a" style="left:791px;top:10px" width="24" height="24" viewBox="0 0 24 24"><circle cx="12" cy="12" r="11.8" fill="#e8eaed"/><circle cx="12" cy="8" r="3.6" fill="#35363a"/><path d="M4.5 17Q5.5 13 12 13Q18.5 13 19.5 17Q16.5 20.5 12 20.5Q7.5 20.5 4.5 17Z" fill="#35363a"/></svg>
    <svg class="a" style="left:840px;top:14px" width="6" height="18" viewBox="0 0 6 18"><circle cx="3" cy="2.2" r="2.1" fill="#e8eaed"/><circle cx="3" cy="8.5" r="2.1" fill="#e8eaed"/><circle cx="3" cy="14.8" r="2.1" fill="#e8eaed"/></svg>
  </div>
  <div id="bm" class="a">
    <svg class="a" style="left:21px;top:10px" width="17" height="17" viewBox="0 0 17 17">
      <rect x="0" y="0" width="4" height="4" fill="#ea4335"/><rect x="6.5" y="0" width="4" height="4" fill="#ea4335"/><rect x="13" y="0" width="4" height="4" fill="#ea4335"/>
      <rect x="0" y="6.5" width="4" height="4" fill="#34a853"/><rect x="6.5" y="6.5" width="4" height="4" fill="#4285f4"/><rect x="13" y="6.5" width="4" height="4" fill="#fbbc04"/>
      <rect x="0" y="13" width="4" height="4" fill="#34a853"/><rect x="6.5" y="13" width="4" height="4" fill="#fbbc04"/><rect x="13" y="13" width="4" height="4" fill="#fbbc04"/>
    </svg>
    <div class="a cjt" style="left:49px;top:12px"><span class="c">应</span><span class="c">用</span></div>
    <svg class="a" style="left:100px;top:10px" width="18" height="18" viewBox="0 0 18 18"><circle cx="9" cy="9" r="9" fill="#e8eaed"/><path d="M2.2 8.8A6.8 6.8 0 0 1 10 2.2L8 5.5Q8.2 7 11 7.8Q14 8.5 15.7 9.8A6.8 6.8 0 0 1 7.5 15.6L7.5 13.8Q10 13 10 11Q10 9 7.5 8.9Z" fill="#35363a"/></svg>
<div class="a cjt" style="left:129px;top:12px"><span class="c">百</span><span class="c">度</span></div>
<svg class="a" style="left:180px;top:10px" width="18" height="18" viewBox="0 0 18 18"><circle cx="9" cy="9" r="9" fill="#e8eaed"/><path d="M2.2 8.8A6.8 6.8 0 0 1 10 2.2L8 5.5Q8.2 7 11 7.8Q14 8.5 15.7 9.8A6.8 6.8 0 0 1 7.5 15.6L7.5 13.8Q10 13 10 11Q10 9 7.5 8.9Z" fill="#35363a"/></svg>
<div class="a cjt" style="left:209px;top:12px"><span class="c">淘</span><span class="c">宝</span></div>
<svg class="a" style="left:260px;top:10px" width="18" height="18" viewBox="0 0 18 18"><circle cx="9" cy="9" r="9" fill="#e8eaed"/><path d="M2.2 8.8A6.8 6.8 0 0 1 10 2.2L8 5.5Q8.2 7 11 7.8Q14 8.5 15.7 9.8A6.8 6.8 0 0 1 7.5 15.6L7.5 13.8Q10 13 10 11Q10 9 7.5 8.9Z" fill="#35363a"/></svg>
<div class="a cjt" style="left:289px;top:12px"><span class="c">京</span><span class="c">东</span></div>
<svg class="a" style="left:340px;top:10px" width="18" height="18" viewBox="0 0 18 18"><circle cx="9" cy="9" r="9" fill="#e8eaed"/><path d="M2.2 8.8A6.8 6.8 0 0 1 10 2.2L8 5.5Q8.2 7 11 7.8Q14 8.5 15.7 9.8A6.8 6.8 0 0 1 7.5 15.6L7.5 13.8Q10 13 10 11Q10 9 7.5 8.9Z" fill="#35363a"/></svg>
<div class="a cjt" style="left:369px;top:12px"><span class="c">天</span><span class="c">猫</span></div>
<svg class="a" style="left:420px;top:10px" width="18" height="18" viewBox="0 0 18 18"><circle cx="9" cy="9" r="9" fill="#e8eaed"/><path d="M2.2 8.8A6.8 6.8 0 0 1 10 2.2L8 5.5Q8.2 7 11 7.8Q14 8.5 15.7 9.8A6.8 6.8 0 0 1 7.5 15.6L7.5 13.8Q10 13 10 11Q10 9 7.5 8.9Z" fill="#35363a"/></svg>
<div class="a cjt" style="left:449px;top:12px"><span class="c">苏</span><span class="c">宁</span><span class="c">易</span><span class="c">购</span></div>
    <div class="a" style="left:529px;top:9px;width:20px;height:20px;background:#c70000"></div>
    <svg class="a" style="left:529px;top:9px" width="20" height="20" viewBox="0 0 20 20"><path d="M15.5 6.5Q14 4.5 11 4.5Q5 4.5 5 10Q5 15.5 11 15.5Q14 15.5 15.5 13.5" fill="none" stroke="#fff" stroke-width="3.6"/></svg>
    <div class="a cjt" style="left:559px;top:12px"><span class="c">个</span><span class="c">人</span><span class="c">资</span><span class="c">料</span><span class="lt">-</span><span class="c">个</span><span class="c">人</span><span class="c">中</span><span class="c">心</span><span class="lt">...</span></div>
    <svg class="a" style="left:838px;top:15px" width="10" height="8" viewBox="0 0 10 8"><path d="M1 1L4 4L1 7M5.5 1L8.5 4L5.5 7" fill="none" stroke="#e8eaed" stroke-width="1.5"/></svg>
  </div>
  <div class="a" style="left:-1px;top:0;width:2px;height:1004px;background:#1c1c24"></div>
  <div id="page" class="a">
    <div class="pt" style="left:11px;top:12px">12</div>
    <div class="pt" style="left:46px;top:12px">54</div>
    <div class="pt" style="left:81px;top:12px">5</div>
    <div class="pt" style="left:105px;top:12px">69</div>
    <div class="pt" style="left:11px;top:38px">1</div>
    <div class="pt" style="left:35px;top:38px">24</div>
    <div class="pt" style="left:70px;top:38px">56</div>
    <div class="pt" style="left:105px;top:38px">2</div>
    <div class="pt" style="left:11px;top:64px">9</div>
    <div class="pt" style="left:35px;top:64px">65</div>
    <div class="pt" style="left:70px;top:64px">22</div>
    <div class="pt" style="left:105px;top:64px">8</div>
  </div>
</div>
</body></html>
